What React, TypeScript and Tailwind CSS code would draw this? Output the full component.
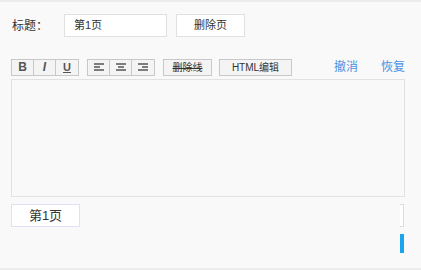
import React from "react";

const font = { fontFamily: '"Liberation Sans", "Noto Sans CJK SC", sans-serif' };

function AlignIcon({ kind }: { kind: "left" | "center" | "right" }) {
  const short = kind === "left" ? "M3 7h6" : kind === "center" ? "M5 7h6" : "M7 7h6";
  return (
    <svg width="16" height="14" viewBox="0 0 16 14">
      <path d={`M3 4h10 ${short} M3 10h10`} stroke="#555" strokeWidth="1.4" fill="none" />
    </svg>
  );
}

function ToolBtn({ children }: { children: React.ReactNode }) {
  return (
    <div className="flex h-[15px] w-[22px] items-center justify-center border-r border-[#c8c8c8] bg-[#f4f4f4] last:border-r-0">
      {children}
    </div>
  );
}

export default function App() {
  return (
    <div style={font} className="h-[270px] w-[421px] overflow-hidden border-t-2 border-b-2 border-[#ececec] bg-[#f9f9f9] text-[#333]">
      <div className="flex items-center pl-[12px] pt-[12px]">
        <span className="w-[52px] text-[12px]">标题：</span>
        <div className="flex h-[23px] w-[103px] items-center border border-[#e0e0e0] bg-white pl-[9px] text-[11px]">第1页</div>
        <div className="ml-[9px] flex h-[23px] w-[69px] items-center justify-center border border-[#e0e0e0] bg-white text-[11px]">删除页</div>
      </div>

      <div className="mt-[21px] flex items-center pl-[11px] pr-[16px]">
        <div className="flex border border-[#c8c8c8]">
          <ToolBtn><span className="text-[12px] font-bold text-[#555]">B</span></ToolBtn>
          <ToolBtn><span className="text-[12px] font-bold italic text-[#555]">I</span></ToolBtn>
          <ToolBtn><span className="text-[11px] font-bold text-[#555] underline">U</span></ToolBtn>
        </div>
        <div className="ml-[8px] flex border border-[#c8c8c8]">
          <ToolBtn><AlignIcon kind="left" /></ToolBtn>
          <ToolBtn><AlignIcon kind="center" /></ToolBtn>
          <ToolBtn><AlignIcon kind="right" /></ToolBtn>
        </div>
        <div className="ml-[8px] flex h-[17px] w-[49px] items-center justify-center border border-[#c8c8c8] bg-[#f4f4f4] text-[10px] text-[#333] line-through">删除线</div>
        <div className="ml-[7px] flex h-[17px] w-[73px] items-center justify-center border border-[#c8c8c8] bg-[#f4f4f4] text-[10px] text-[#333]">HTML编辑</div>
        <span className="ml-auto text-[12px] text-[#4a90e2]">撤消</span>
        <span className="ml-[23px] text-[12px] text-[#4a90e2]">恢复</span>
      </div>

      <div className="ml-[11px] mt-[3px] h-[118px] w-[394px] border border-[#e2e2e2] bg-[#f9f9f9]" />

      <div className="mt-[7px] flex items-start pl-[11px] pr-[17px]">
        <div className="flex h-[23px] w-[69px] items-center justify-center border border-[#e0e0f8] bg-white text-[13px]">第1页</div>
        <div className="ml-auto h-[23px] w-[4px] border-y border-r border-[#dcdcdc] bg-white" />
      </div>
      <div className="mt-[7px] flex justify-end pr-[17px]">
        <div className="h-[19px] w-[4px] bg-[#1aa4ec]" />
      </div>
    </div>
  );
}
